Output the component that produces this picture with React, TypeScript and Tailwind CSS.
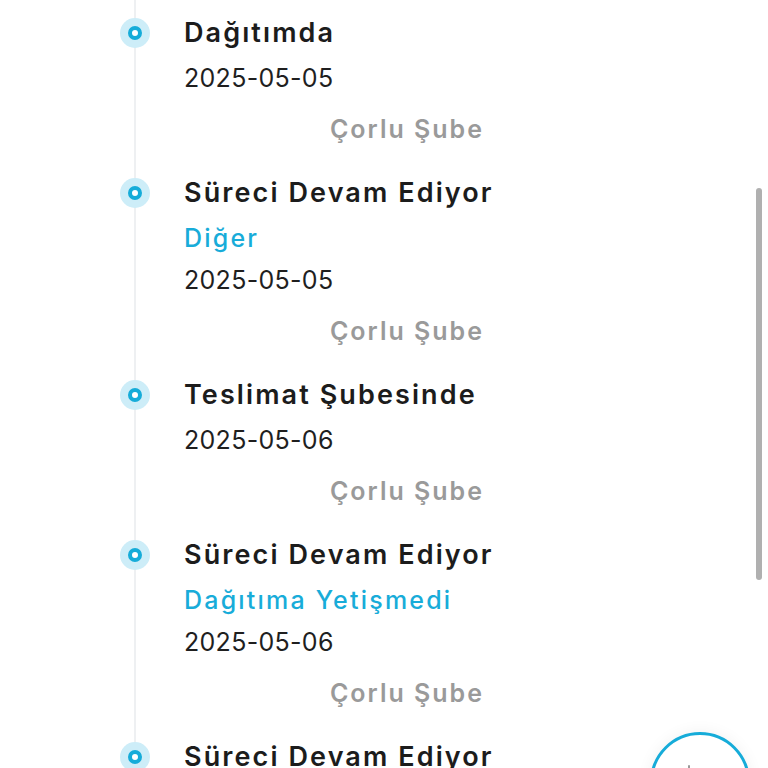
import React from "react";

type Item = { title: string; sub?: string; date: string; branch: string };

const items: Item[] = [
  { title: "Dağıtımda", date: "2025-05-05", branch: "Çorlu Şube" },
  { title: "Süreci Devam Ediyor", sub: "Diğer", date: "2025-05-05", branch: "Çorlu Şube" },
  { title: "Teslimat Şubesinde", date: "2025-05-06", branch: "Çorlu Şube" },
  { title: "Süreci Devam Ediyor", sub: "Dağıtıma Yetişmedi", date: "2025-05-06", branch: "Çorlu Şube" },
  { title: "Süreci Devam Ediyor", date: "2025-05-06", branch: "Çorlu Şube" },
];

function Dot() {
  return (
    <div className="mt-[9px] -ml-[16px] flex h-[30px] w-[30px] shrink-0 items-center justify-center rounded-full bg-[#cdedf8]">
      <div className="h-[14px] w-[14px] rounded-full border-[4px] border-[#16acd9] bg-white" />
    </div>
  );
}

export default function App() {
  return (
    <div
      className="relative h-[768px] w-[768px] overflow-hidden bg-white"
      style={{ fontFamily: "Inter, 'Noto Sans', sans-serif" }}
    >
      <div className="ml-[134px] border-l-2 border-[#eef0f2] pt-[9px]">
        {items.map((it, i) => (
          <div key={i} className="flex pb-[19px]">
            <Dot />
            <div className="ml-[34px] flex w-[300px] flex-col">
              <div className="text-[27px] font-semibold leading-[48px] tracking-[2.1px] text-[#1c1c1c] whitespace-nowrap">{it.title}</div>
              {it.sub && (
                <div className="text-[25px] font-medium leading-[42px] tracking-[2.2px] text-[#18acd9] whitespace-nowrap">{it.sub}</div>
              )}
              <div className="text-[25px] font-normal leading-[42px] tracking-[0.3px] text-[#1f1f1f]">{it.date}</div>
              <div className="mt-[9px] text-right text-[25px] font-semibold leading-[42px] tracking-[2px] text-[#9a9a9a] whitespace-nowrap">{it.branch}</div>
            </div>
          </div>
        ))}
      </div>

      <div className="absolute left-[756px] top-[188px] h-[392px] w-[6px] rounded-full bg-[#b0b0b0]" />

      <div className="absolute left-[650px] top-[732px] flex h-[100px] w-[100px] items-start justify-center rounded-full border-[3px] border-[#16acd9] bg-white shadow-[0_0_16px_rgba(0,0,0,0.06)]">
        <div className="ml-[-22px] mt-[30px] h-[4px] w-[2px] rounded-full bg-[#9a9a9a]" />
      </div>
    </div>
  );
}
